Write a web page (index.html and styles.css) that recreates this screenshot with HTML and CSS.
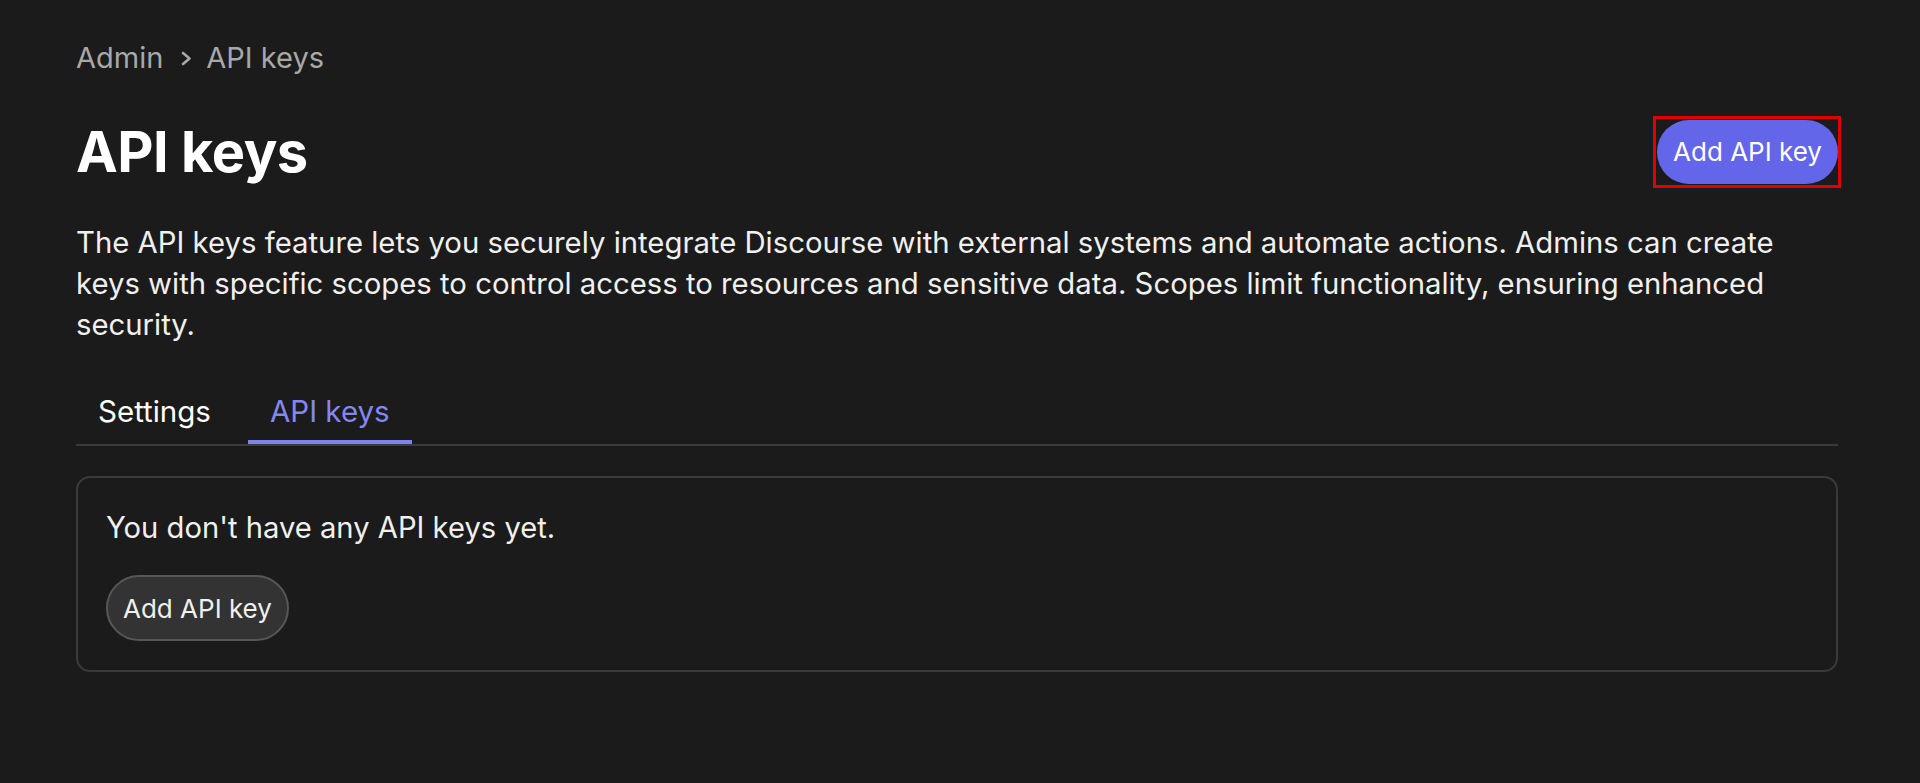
FILE: index.html
```html
<!DOCTYPE html>
<html lang="en">
<head>
<meta charset="utf-8">
<title>API keys</title>
<link rel="stylesheet" href="styles.css">
</head>
<body>
<main class="page">
  <nav class="breadcrumb">
    <span class="crumb">Admin</span>
    <svg class="chevron" viewBox="0 0 14 15" width="14" height="15"><path d="M4 2 L10.5 7.5 L4 13" fill="none" stroke="currentColor" stroke-width="2.6" stroke-linecap="round" stroke-linejoin="round"/></svg>
    <span class="crumb">API keys</span>
  </nav>
  <header class="header">
    <h1 class="title">API keys</h1>
    <span class="highlight"><button class="btn btn-primary">Add API key</button></span>
  </header>
  <p class="description">The API keys feature lets you securely integrate Discourse with external systems and automate actions. Admins can create keys with specific scopes to control access to resources and sensitive data. Scopes limit functionality, ensuring enhanced security.</p>
  <div class="tabs">
    <span class="tab">Settings</span>
    <span class="tab active">API keys</span>
  </div>
  <section class="card">
    <p class="empty">You don't have any API keys yet.</p>
    <button class="btn btn-default">Add API key</button>
  </section>
</main>
</body>
</html>
```

FILE: styles.css
```css
* { box-sizing: border-box; }
html, body { margin: 0; padding: 0; }
body {
  background: #1b1b1b;
  color: #f0f0f0;
  font-family: Inter, "Noto Sans", sans-serif;
  font-size: 28px;
  height: 783px;
  overflow: hidden;
}
.page {
  padding: 38px 82px 0 76px;
}
.breadcrumb {
  display: flex;
  align-items: center;
  color: #a8a8a8;
  font-size: 29px;
  line-height: 40px;
}
.chevron {
  width: 14px;
  height: 15px;
  margin: 0 13px 0 16px;
  color: #a8a8a8;
}
.header {
  display: flex;
  justify-content: space-between;
  align-items: center;
  margin-top: 37px;
}
.title {
  margin: 0;
  padding-top: 1px;
  font-size: 56px;
  font-weight: 700;
  line-height: 72px;
  color: #ffffff;
  letter-spacing: -0.5px;
}
.highlight {
  display: flex;
  border: 3px solid #e00000;
  padding: 1px 0 1px 1px;
  margin-right: -3px;
}
.btn {
  font-family: Inter, "Noto Sans", sans-serif;
  font-size: 26px;
  border-radius: 999px;
  cursor: pointer;
}
.btn-primary {
  background: #6366e8;
  color: #ffffff;
  border: none;
  height: 64px;
  width: 181px;
  padding: 0;
}
.btn-default {
  background: #333333;
  color: #f0f0f0;
  border: 2px solid #575757;
  height: 66px;
  padding: 0 15px;
}
.description {
  margin: 34px 0 0;
  font-size: 29.3px;
  line-height: 41px;
  color: #f0f0f0;
}
.tabs {
  display: flex;
  gap: 15px;
  margin-top: 38px;
  border-bottom: 2px solid #3a3a3a;
}
.tab {
  padding: 8px 22px 9px;
  line-height: 40px;
  font-size: 29.5px;
  color: #ffffff;
  border-bottom: 4px solid transparent;
}
.tab.active {
  color: #8388f0;
  border-bottom-color: #7e83ee;
}
.card {
  margin-top: 30px;
  border: 2px solid #3a3a3a;
  border-radius: 14px;
  padding: 30px 28px 29px;
}
.empty {
  margin: 0 0 27px;
  line-height: 40px;
  font-size: 29.2px;
}
```
